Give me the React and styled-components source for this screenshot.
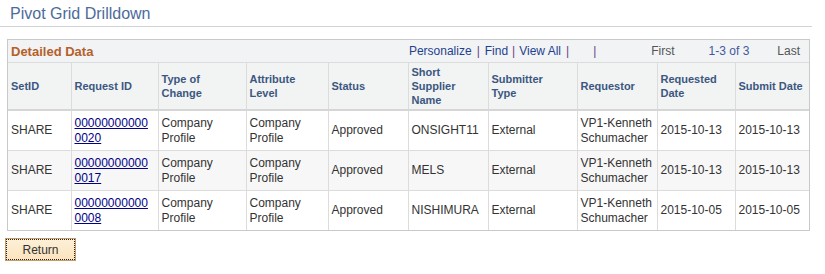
import React from "react";
import styled, { createGlobalStyle } from "styled-components";

const Global = createGlobalStyle`
  html, body { margin: 0; padding: 0; background: #fff; }
  body { font-family: Arial, "Liberation Sans", sans-serif; font-size: 12px; color: #333; }
`;

const Page = styled.div`
  width: 825px;
  padding-top: 5px;
`;

const TitleBar = styled.div`
  width: 812px;
  height: 22px;
  border-bottom: 1px solid #d2d2d2;
  padding-left: 10px;
  box-sizing: border-box;
  font-size: 16px;
  line-height: 18px;
  color: #4b6b9c;
`;

const Grid = styled.div`
  margin: 12px 0 0 7px;
  width: 803px;
  border: 1px solid #c9c9c9;
  box-sizing: border-box;
`;

const GridHeader = styled.div`
  display: flex;
  align-items: center;
  height: 22px;
  background: #f1f3f4;
  border-bottom: 1px solid #dcdcdc;
  padding: 0 9px 0 3px;
`;

const GridTitle = styled.div`
  flex: 1;
  font-weight: bold;
  font-size: 13px;
  color: #b5602a;
`;

const Nav = styled.div`
  display: flex;
  align-items: center;
  font-size: 12px;
  color: #555;
`;

const NavLink = styled.span`
  color: #1f3f8f;
`;

const Sep = styled.span`
  color: #6b3f86;
  margin: ${(p) => p.$m || "0 5px"};
`;

const Plain = styled.span`
  color: #555;
  margin-left: ${(p) => p.$ml || 0}px;
`;

const Count = styled.span`
  color: #3f5a9c;
  margin-left: ${(p) => p.$ml || 0}px;
`;

const Table = styled.table`
  border-collapse: collapse;
  table-layout: fixed;
  width: 801px;
`;

const Th = styled.th`
  background: #f2f3f3;
  color: #3b5781;
  font-weight: bold;
  font-size: 11px;
  line-height: 14px;
  text-align: left;
  vertical-align: middle;
  height: 46px;
  padding: 0 3px;
  border-right: 1px solid #dcdcdc;
  border-bottom: 2px solid #d6d6d6;
  &:last-child { border-right: none; }
`;

const Td = styled.td`
  background: ${(p) => (p.$alt ? "#f7f7f7" : "#fff")};
  color: #333;
  font-size: 12px;
  line-height: 15px;
  vertical-align: middle;
  height: 39px;
  padding: 0 3px;
  border-right: 1px solid #dcdcdc;
  border-bottom: 1px solid #dcdcdc;
  &:last-child { border-right: none; }
  tr:last-child & { border-bottom: none; }
`;

const Link = styled.a`
  color: #000088;
  text-decoration: underline;
`;

const Button = styled.button`
  margin: 7px 0 0 5px;
  width: 71px;
  height: 23px;
  padding: 0;
  font-family: Arial, "Liberation Sans", sans-serif;
  font-size: 12px;
  color: #333;
  background: linear-gradient(#fdf0d8, #fbe4bd);
  border: 1px solid #c59b68;
  outline: 1px dotted #222;
  outline-offset: -2px;
`;

const widths = [63, 87, 88, 82, 80, 80, 89, 80, 78, 74];
const headers = [
  "SetID",
  "Request ID",
  ["Type of", "Change"],
  ["Attribute", "Level"],
  "Status",
  ["Short", "Supplier", "Name"],
  ["Submitter", "Type"],
  "Requestor",
  ["Requested", "Date"],
  "Submit Date",
];

const rows = [
  ["0020", "ONSIGHT11", "2015-10-13"],
  ["0017", "MELS", "2015-10-13"],
  ["0008", "NISHIMURA", "2015-10-05"],
];

const lines = (h) =>
  Array.isArray(h)
    ? h.map((t, i) => (
        <React.Fragment key={i}>
          {i > 0 && <br />}
          {t}
        </React.Fragment>
      ))
    : h;

export default function App() {
  return (
    <Page>
      <Global />
      <TitleBar>Pivot Grid Drilldown</TitleBar>
      <Grid>
        <GridHeader>
          <GridTitle>Detailed Data</GridTitle>
          <Nav>
            <NavLink>Personalize</NavLink>
            <Sep $m="0 5px 0 5px">|</Sep>
            <NavLink>Find</NavLink>
            <Sep $m="0 4px 0 4px">|</Sep>
            <NavLink>View All</NavLink>
            <Sep $m="0 0 0 5px">|</Sep>
            <Sep $m="0 0 0 24px">|</Sep>
            <Plain $ml={55}>First</Plain>
            <Count $ml={34}>1-3 of 3</Count>
            <Plain $ml={28}>Last</Plain>
          </Nav>
        </GridHeader>
        <Table>
          <colgroup>
            {widths.map((w, i) => (
              <col key={i} style={{ width: w }} />
            ))}
          </colgroup>
          <thead>
            <tr>
              {headers.map((h, i) => (
                <Th key={i}>{lines(h)}</Th>
              ))}
            </tr>
          </thead>
          <tbody>
            {rows.map((r, i) => {
              const alt = i === 1;
              return (
                <tr key={i}>
                  <Td $alt={alt}>SHARE</Td>
                  <Td $alt={alt}>
                    <Link href="#">
                      00000000000
                      <br />
                      {r[0]}
                    </Link>
                  </Td>
                  <Td $alt={alt}>Company<br />Profile</Td>
                  <Td $alt={alt}>Company<br />Profile</Td>
                  <Td $alt={alt}>Approved</Td>
                  <Td $alt={alt}>{r[1]}</Td>
                  <Td $alt={alt}>External</Td>
                  <Td $alt={alt}>VP1-Kenneth<br />Schumacher</Td>
                  <Td $alt={alt}>{r[2]}</Td>
                  <Td $alt={alt}>{r[2]}</Td>
                </tr>
              );
            })}
          </tbody>
        </Table>
      </Grid>
      <Button>Return</Button>
    </Page>
  );
}
